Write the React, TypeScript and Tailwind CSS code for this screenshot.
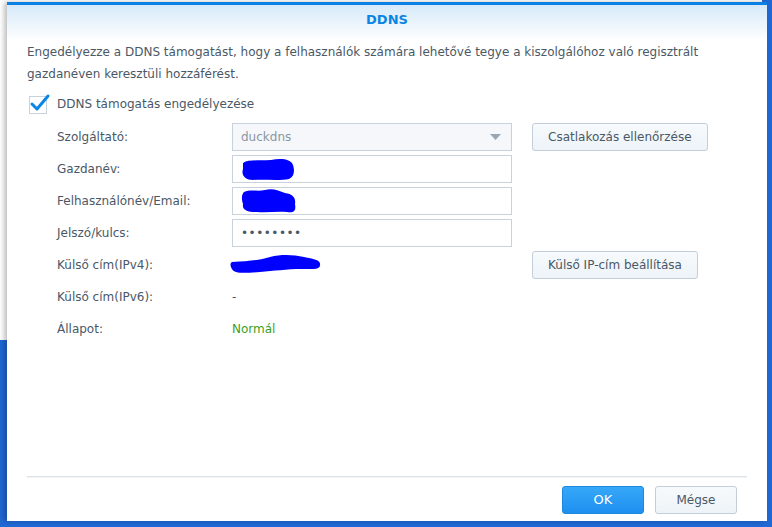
import React from 'react'

const font = { fontFamily: '"DejaVu Sans", Verdana, sans-serif' }

function Blob({ d, w, h }: { d: string; w: number; h: number }) {
  return (
    <svg width={w} height={h} viewBox={`0 0 ${w} ${h}`} className="block">
      <path d={d} fill="#0000ff" />
    </svg>
  )
}

function Field({ children, select }: { children?: React.ReactNode; select?: boolean }) {
  return (
    <div
      className={`h-[28px] w-[280px] border border-[#c8d2dc] flex items-center px-[8px] ${
        select ? 'bg-[#f5f7fa]' : 'bg-white'
      }`}
    >
      {children}
    </div>
  )
}

function Btn({ children }: { children: React.ReactNode }) {
  return (
    <button className="h-[28px] px-[15px] rounded-[3px] border border-[#c3ced9] bg-gradient-to-b from-[#f7fafc] to-[#edf3f8] text-[12px] text-[#4a5866] whitespace-nowrap">
      {children}
    </button>
  )
}

export default function App() {
  return (
    <div className="relative w-[772px] h-[527px] overflow-hidden bg-[#2068d4]" style={font}>
      {/* window behind */}
      <div className="absolute left-0 top-0 w-[762px] h-[340px] bg-white" />

      {/* dialog */}
      <div className="absolute left-[7px] top-[2px] w-[760px] h-[519px] bg-white border-t-[3px] border-[#0a80e4] shadow-[-3px_0_5px_rgba(0,0,0,0.25)] flex flex-col">
        <div className="h-[36px] bg-gradient-to-b from-[#d6e9f9] to-white flex justify-center pt-[8px]">
          <span className="text-[13px] leading-[14px] font-bold text-[#0a84e3]">DDNS</span>
        </div>

        <div className="px-[20px]">
          <p className="text-[12px] leading-[22px] text-[#4b5866]">
            Engedélyezze a DDNS támogatást, hogy a felhasználók számára lehetővé tegye a kiszolgálóhoz való regisztrált
            <br />
            gazdanéven keresztüli hozzáférést.
          </p>

          <div className="mt-[8px] h-[22px] flex items-center">
            <div className="relative ml-[2px] w-[18px] h-[18px] border border-[#c8d2dc] bg-white mt-[2px]">
              <svg className="absolute -left-[1px] -top-[4px]" width="22" height="20" viewBox="0 0 22 20">
                <path d="M3 11 L8 16 L19 3" stroke="#0a86e6" strokeWidth="3" fill="none" strokeLinecap="round" strokeLinejoin="round" />
              </svg>
            </div>
            <span className="ml-[10px] text-[12px] text-[#4a5866]">DDNS támogatás engedélyezése</span>
          </div>

          <div className="mt-[8px] ml-[30px] grid grid-cols-[155px_280px_auto] gap-x-[20px] gap-y-[4px] auto-rows-[28px] items-center text-[12px] text-[#4a5866]">
            <span>Szolgáltató:</span>
            <Field select>
              <span className="flex-1 text-[#8a96a2]">duckdns</span>
              <svg width="11" height="6" viewBox="0 0 11 6" className="mr-[2px]">
                <path d="M0 0 H11 L5.5 6 Z" fill="#9aa6b2" />
              </svg>
            </Field>
            <div>
              <Btn>Csatlakozás ellenőrzése</Btn>
            </div>

            <span>Gazdanév:</span>
            <Field>
              <Blob w={54} h={24} d="M2 6 C8 2 20 4 30 3 C40 1 50 2 52 8 C54 14 53 20 48 22 C38 24 22 22 12 23 C4 23 0 18 2 12 Z" />
            </Field>
            <div />

            <span>Felhasználónév/Email:</span>
            <Field>
              <Blob w={56} h={26} d="M3 4 C10 1 16 4 24 2 C32 0 38 3 44 5 C52 6 55 10 54 16 C55 22 54 25 46 24 C36 23 26 25 16 24 C6 24 1 22 2 16 C0 10 1 6 3 4 Z" />
            </Field>
            <div />

            <span>Jelszó/kulcs:</span>
            <Field>
              <span className="text-[#4a5866] text-[12px] tracking-[0.5px]">••••••••</span>
            </Field>
            <div />

            <span>Külső cím(IPv4):</span>
            <div className="-ml-[2px]">
              <Blob w={92} h={22} d="M2 8 C20 7 30 6 40 3 C52 0 64 1 74 3 C84 5 91 6 90 11 C90 16 82 15 72 15 C56 15 44 17 30 18 C16 19 4 20 2 15 C0 12 0 9 2 8 Z" />
            </div>
            <div>
              <Btn>Külső IP-cím beállítása</Btn>
            </div>

            <span>Külső cím(IPv6):</span>
            <span>-</span>
            <div />

            <span>Állapot:</span>
            <span className="text-[#3c9e1c]">Normál</span>
            <div />
          </div>
        </div>

        <div className="flex-1" />

        <div className="mx-[20px] h-[2px] bg-[#dde2e7] border-b border-[#f2f4f6]" />
        <div className="flex justify-end gap-[11px] pr-[30px] pt-[8px] pb-[7px]">
          <button className="w-[82px] h-[28px] rounded-[3px] border border-[#1e88de] bg-gradient-to-b from-[#36a8f8] to-[#1f8ff0] text-[13px] text-white">
            OK
          </button>
          <button className="w-[82px] h-[28px] rounded-[3px] border border-[#c3ced9] bg-gradient-to-b from-[#f7fafc] to-[#edf3f8] text-[12px] text-[#4a5866]">
            Mégse
          </button>
        </div>
      </div>
    </div>
  )
}
